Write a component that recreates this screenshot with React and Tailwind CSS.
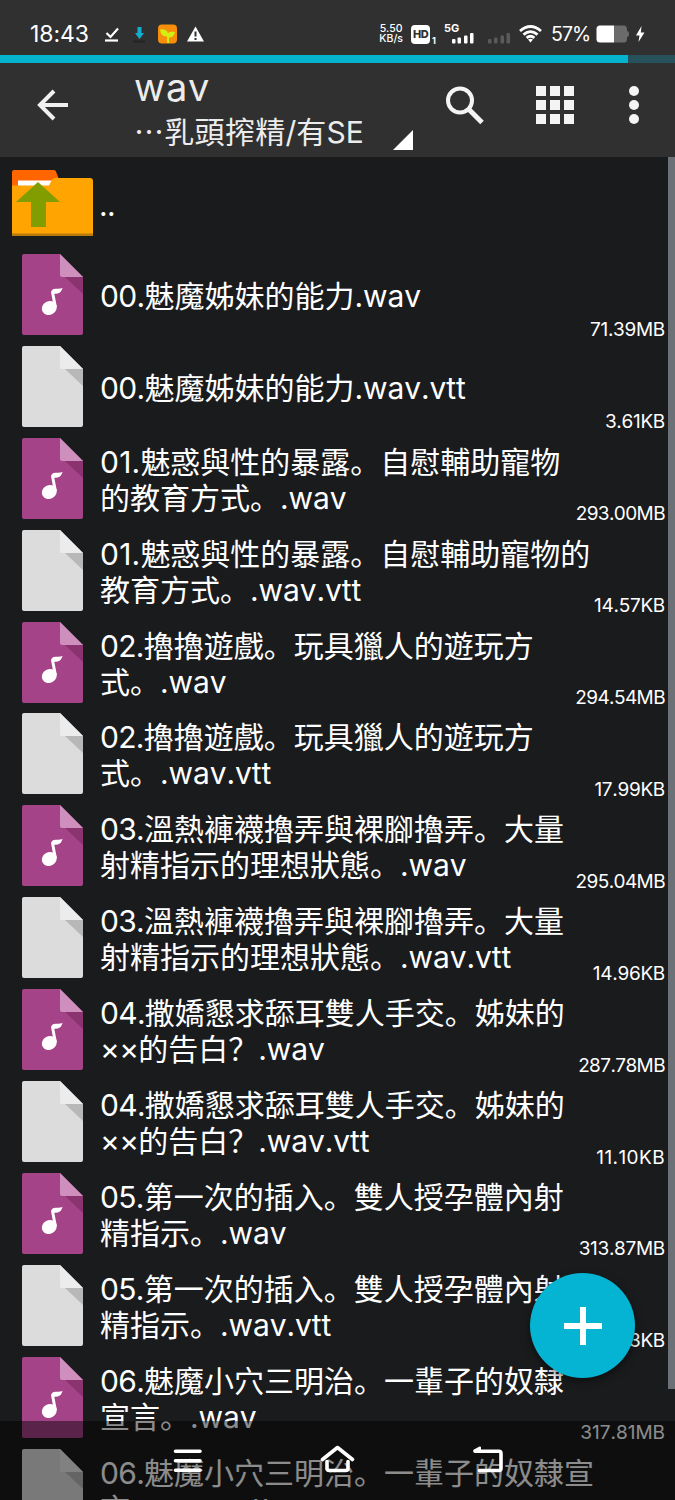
import React from "react";
import clsx from "clsx";

const files = [
  { type: "audio", lines: ["00.魅魔姊妹的能力.wav"], size: "71.39MB" },
  { type: "doc", lines: ["00.魅魔姊妹的能力.wav.vtt"], size: "3.61KB" },
  { type: "audio", lines: ["01.魅惑與性的暴露。自慰輔助寵物", "的教育方式。.wav"], size: "293.00MB" },
  { type: "doc", lines: ["01.魅惑與性的暴露。自慰輔助寵物的", "教育方式。.wav.vtt"], size: "14.57KB" },
  { type: "audio", lines: ["02.擼擼遊戲。玩具獵人的遊玩方", "式。.wav"], size: "294.54MB" },
  { type: "doc", lines: ["02.擼擼遊戲。玩具獵人的遊玩方", "式。.wav.vtt"], size: "17.99KB" },
  { type: "audio", lines: ["03.溫熱褲襪擼弄與裸腳擼弄。大量", "射精指示的理想狀態。.wav"], size: "295.04MB" },
  { type: "doc", lines: ["03.溫熱褲襪擼弄與裸腳擼弄。大量", "射精指示的理想狀態。.wav.vtt"], size: "14.96KB" },
  { type: "audio", lines: ["04.撒嬌懇求舔耳雙人手交。姊妹的", "××的告白？.wav"], size: "287.78MB" },
  { type: "doc", lines: ["04.撒嬌懇求舔耳雙人手交。姊妹的", "××的告白？.wav.vtt"], size: "11.10KB" },
  { type: "audio", lines: ["05.第一次的插入。雙人授孕體內射", "精指示。.wav"], size: "313.87MB" },
  { type: "doc", lines: ["05.第一次的插入。雙人授孕體內射", "精指示。.wav.vtt"], size: "13.93KB" },
  { type: "audio", lines: ["06.魅魔小穴三明治。一輩子的奴隸", "宣言。.wav"], size: "317.81MB" },
  { type: "doc", lines: ["06.魅魔小穴三明治。一輩子的奴隸宣", "言。.wav.vtt"], size: "12.40KB" },
];

// Latin runs use Inter, everything else falls through to the CJK font.
function MixedText({ text }) {
  return text.split(/([\x20-\x7e×]+)/).map((part, idx) => {
    if (!/^[\x20-\x7e×]/.test(part)) return part;
    const isNumber = /^[\d×]/.test(part);
    return (
      <span
        key={idx}
        className={clsx(
          "font-['Inter',sans-serif] leading-none",
          !isNumber && "tracking-[-0.1px]",
          isNumber && (part.includes("1") ? "tracking-[0.2px]" : "tracking-[-0.7px]")
        )}
      >
        {part}
      </span>
    );
  });
}

function FolderUpIcon() {
  return (
    <svg width="81" height="66" viewBox="0 0 81 66" className="block">
      <path d="M2 0H42Q43.5 0 44 1.500L48 12V20H0V2Q0 0 2 0Z" fill="#ff6600" />
      <path d="M6 10.500H41V18H6Z" fill="#fff" />
      <path d="M0 15.500H37L40 9.500Q41 8 43 8H78Q81 8 81 11V66H0Z" fill="#ffa400" />
      <path d="M0 63.500H81V66H0Z" fill="#b97a0c" />
      <path d="M26 12L48 32H34V57H19V32H4Z" fill="#829d00" />
    </svg>
  );
}

function FileIcon({ type }) {
  const audio = type === "audio";
  return (
    <svg width="61" height="81" viewBox="0 0 61 81" className="block">
      <path d="M2 0H38L61 23V79Q61 81 59 81H2Q0 81 0 79V2Q0 0 2 0Z" fill={audio ? "#a54388" : "#dcdcdc"} />
      <path d="M43 23H61V40Z" fill={audio ? "#8b336f" : "#b8b8b8"} />
      <path d="M38 0L61 23H40Q38 23 38 21Z" fill={audio ? "#cf8fbd" : "#ececec"} />
      {audio && (
        <g fill="#fff">
          <ellipse cx="27.300" cy="54" rx="7.700" ry="6.700" transform="rotate(-28 27.300 54)" />
          <path d="M29 38Q30 34.300 34.500 34.700Q38 35 40.600 34Q38.500 40.500 32.300 39.800L34.900 53H31.800Z" />
        </g>
      )}
    </svg>
  );
}

function StatusBar() {
  return (
    <div className="flex h-[55px] items-center pl-[30px] pr-[23px] pt-[13px]">
      <span className="w-[74px] text-[23px] leading-none tracking-[-0.1px]">18:43</span>
      <svg width="100" height="22" viewBox="0 0 100 22">
        <path d="M2.500 10L6.500 14L14 5.500" fill="none" stroke="#fff" strokeWidth="2.200" />
        <path d="M1 17.500H14" stroke="#fff" strokeWidth="2.200" />
        <path d="M33.500 4H37.500V10H40L35.500 16L31 10H33.500Z" fill="#12aed0" />
        <path d="M29 18.500H41" stroke="#222" strokeWidth="2" />
        <rect x="54" y="1.500" width="19" height="19" rx="4" fill="#f78f0c" />
        <path d="M56 6.500Q62 5.500 64 10Q66 8 71 9Q70 14.500 65 14.500V20H63V13.500Q57 14 56 6.500Z" fill="#d3ee12" />
        <path d="M91.500 3.500L100 18.500H83Z" fill="#fff" />
        <path d="M91.500 8.500V13.500M91.500 15V17" stroke="#303030" strokeWidth="2" />
      </svg>
      <div className="ml-auto flex items-center">
        <div className="mr-[8px] w-[24px] whitespace-nowrap text-center text-[10.5px] font-medium leading-[10.5px]">
          5.50
          <br />
          KB/s
        </div>
        <span className="flex h-[19px] w-[19px] items-center justify-center rounded-[4px] bg-white text-[11px] font-extrabold tracking-[-0.5px] text-[#303030]">HD</span>
        <span className="ml-[2px] mr-[8px] self-end text-[9px] font-bold leading-none">1</span>
        <div className="relative h-[20px] w-[31px]">
          <span className="absolute left-0 top-[-1px] text-[11px] font-bold leading-none">5G</span>
          <svg width="31" height="20" viewBox="0 0 31 20" fill="#fff">
            <rect x="8" y="15" width="3.500" height="4.500" rx="1" />
            <rect x="13.500" y="13.500" width="3.500" height="6" rx="1" />
            <rect x="20" y="11.500" width="3.500" height="8" rx="1" />
            <rect x="26" y="9" width="3.500" height="10.500" rx="1" />
          </svg>
        </div>
        <svg width="23" height="20" viewBox="0 0 23 20" fill="#5a5a5a" className="ml-[13px]">
          <rect x="0" y="15" width="3.500" height="4.500" rx="1" />
          <rect x="6" y="13.500" width="3.500" height="6" rx="1" />
          <rect x="12.500" y="11.500" width="3.500" height="8" rx="1" />
          <rect x="18.500" y="9" width="3.500" height="10.500" rx="1" />
        </svg>
        <svg width="23" height="18" viewBox="0 0 23 18" className="ml-[8px]">
          <g fill="none" stroke="#fff" strokeWidth="2.800">
            <path d="M1 6Q11.500 -3 22 6" />
            <path d="M4.500 9.600Q11.500 3.700 18.500 9.600" />
            <path d="M7.600 12.800Q11.500 9.800 15.400 12.800" />
          </g>
          <path d="M9 14.500Q11.500 13 14 14.500L11.500 17.500Z" fill="#fff" />
        </svg>
        <span className="ml-[9px] w-[40px] pt-[2px] text-[19.5px] leading-none tracking-[-0.9px]">57%</span>
        <svg width="56" height="18" viewBox="0 0 56 18" className="ml-[5px]">
          <path d="M4 0.500H28Q31 0.500 31 4.500V6Q33 6 33 9Q33 12 31 12V13.500Q31 17.500 28 17.500H18V0.500Z" fill="#6b6b6b" />
          <path d="M4 0.500H18V17.500H4Q0.500 17.500 0.500 14V4Q0.500 0.500 4 0.500Z" fill="#fff" />
          <path d="M45.500 1L40 10.500H43.500L42.500 17L48.500 7.500H44.800Z" fill="#fff" />
        </svg>
      </div>
    </div>
  );
}

function Toolbar() {
  return (
    <div className="flex h-[94px] items-start">
      <svg width="32" height="32" viewBox="0 0 32 32" fill="none" stroke="#f0f0f0" strokeWidth="4" className="ml-[37px] mt-[26px]">
        <path d="M31 16H3.500M17 2L3 16L17 30" />
      </svg>
      <div className="ml-[65px] w-[259px] pt-[1px] text-[#ececec]">
        <div className="text-[38px] leading-[46px] tracking-[0.8px]">wav</div>
        <div className="whitespace-nowrap font-['Noto_Sans_CJK_SC',sans-serif] text-[30px] leading-[40px] tracking-[0.3px]">
          <MixedText text="…乳頭搾精/有SE" />
        </div>
      </div>
      <svg width="20" height="20" viewBox="0 0 20 20" fill="#fff" className="mt-[67px]">
        <path d="M20 0V20H0Z" />
      </svg>
      <svg width="39" height="39" viewBox="0 0 39 39" fill="none" stroke="#f4f4f4" strokeWidth="4" className="ml-[32px] mt-[23px]">
        <circle cx="15" cy="14.500" r="12" />
        <path d="M23.500 23L37 36.500" strokeWidth="5" />
      </svg>
      <div className="ml-[52px] mt-[23px] grid grid-cols-3 gap-[4px]">
        {Array.from({ length: 9 }).map((_, idx) => (
          <div key={idx} className="h-[10px] w-[10px] bg-[#f4f4f4]" />
        ))}
      </div>
      <div className="ml-[55px] mt-[23px] flex flex-col gap-[4px]">
        <div className="h-[10px] w-[10px] rounded-full bg-[#f4f4f4]" />
        <div className="h-[10px] w-[10px] rounded-full bg-[#f4f4f4]" />
        <div className="h-[10px] w-[10px] rounded-full bg-[#f4f4f4]" />
      </div>
    </div>
  );
}

function FileRow({ file }) {
  const ones = file.size.split("1").length - 1;
  return (
    <div className="flex h-[91.92px] shrink-0 items-center pl-3">
      <div className="flex w-[81px] shrink-0 justify-center">
        <FileIcon type={file.type} />
      </div>
      <div className="ml-[7px] shrink-0 whitespace-pre pb-[1px] text-[30px] leading-[36px]">
        {file.lines.map((line) => (
          <div key={line}>
            <MixedText text={line} />
          </div>
        ))}
      </div>
      <div
        className={clsx(
          "-ml-24 mr-[3px] flex-1 self-end text-right font-['Inter',sans-serif] text-[19px] leading-[20px]",
          ones === 0 && "tracking-[-0.6px]",
          ones === 1 && "tracking-[-0.3px]",
          ones === 2 && "tracking-[0px]",
          ones > 2 && "tracking-[0.4px]"
        )}
      >
        {file.size}
      </div>
    </div>
  );
}

export default function App() {
  return (
    <div className="relative flex h-[1500px] w-[675px] flex-col overflow-hidden bg-[#1a1b1d] font-['Inter','Noto_Sans_CJK_SC',sans-serif] text-white [font-kerning:none]">
      <header className="shrink-0 bg-[#303030]">
        <StatusBar />
        <div className="h-2 bg-[#28525b]">
          <div className="h-2 w-[628px] bg-[#06b3cf]" />
        </div>
        <Toolbar />
      </header>

      <div className="flex min-h-0 flex-1">
        <div className="flex w-[668px] flex-col overflow-hidden font-['Noto_Sans_CJK_SC',sans-serif]">
          <div className="flex h-[91.5px] shrink-0 items-center pl-3">
            <FolderUpIcon />
            <span className="ml-[6px] pt-[4px] font-['Inter',sans-serif] text-[30px] leading-[36px] tracking-[-0.7px]">..</span>
          </div>
          {files.map((file, idx) => (
            <FileRow key={idx} file={file} />
          ))}
        </div>
        <div className="h-[1232px] w-[7px] bg-[#6c7077]" />
      </div>

      <button className="absolute left-[530px] top-[1273px] flex h-[105px] w-[105px] items-center justify-center rounded-full bg-[#04b4d2] shadow-[0_3px_8px_rgba(0,0,0,0.5)]">
        <svg width="38" height="38" viewBox="0 0 38 38" stroke="#fff" strokeWidth="6">
          <path d="M19 0V38M0 19H38" />
        </svg>
      </button>

      {/* system navigation */}
      <nav className="absolute inset-x-0 bottom-0 flex h-[79px] justify-center gap-[114px] bg-black/45 pt-[22px]">
        <svg width="36" height="34" viewBox="0 0 36 34" fill="none" stroke="#fff" strokeWidth="3.600" strokeLinecap="round">
          <path d="M5.500 8.200H30M5.500 17.700H30M5.500 27.200H30" />
        </svg>
        <svg width="36" height="34" viewBox="0 0 36 34" fill="none" stroke="#fff" strokeWidth="3.600" strokeLinecap="round" strokeLinejoin="round">
          <path d="M2.500 16.500L17.500 4.500L32.500 16.500M7 18.500V25Q7 27.500 9.500 27.500H25.500Q28 27.500 28 25V18.500" />
        </svg>
        <svg width="36" height="34" viewBox="0 0 36 34" fill="none" stroke="#fff" strokeWidth="3.600" strokeLinecap="round" strokeLinejoin="round">
          <path d="M5 8.200H29Q31 8.200 31 10.500V25Q31 27.500 29 27.500H9.500" />
          <path d="M4.500 7.500L10 4.500V8Z" fill="#fff" strokeWidth="2" />
        </svg>
      </nav>
    </div>
  );
}
